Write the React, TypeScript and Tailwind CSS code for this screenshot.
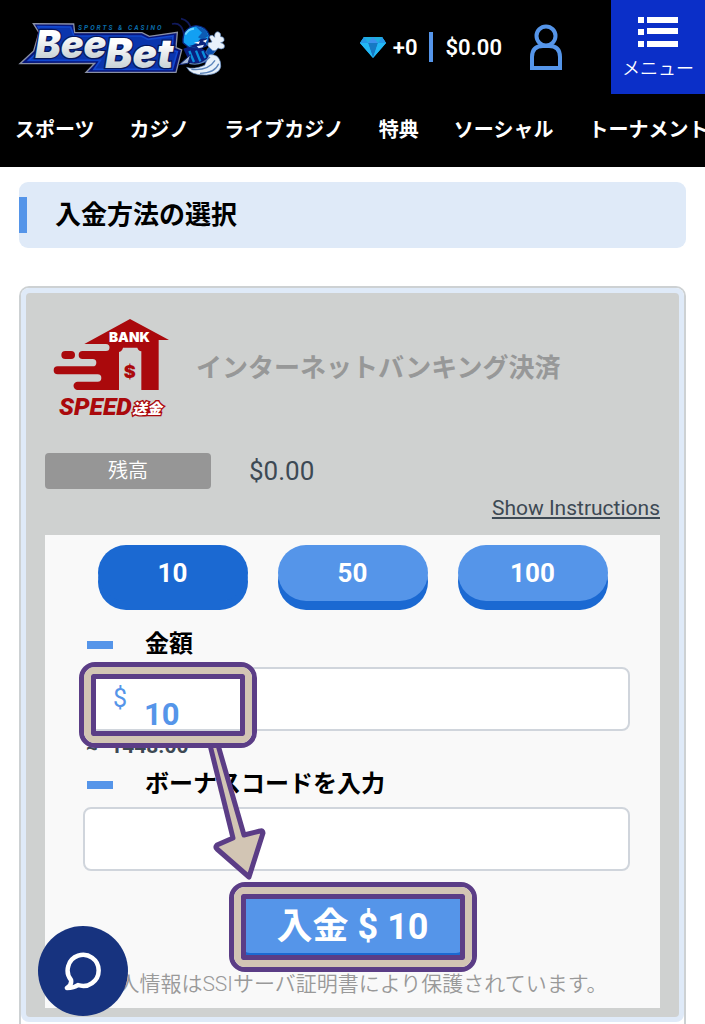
import { useState } from 'react';

const navItems = ['スポーツ', 'カジノ', 'ライブカジノ', '特典', 'ソーシャル', 'トーナメント'];
const presets = ['10', '50', '100'];

function BeeBetLogo() {
  return (
    <svg viewBox="54 48 630 186" className="h-[62px] w-[210px]" role="img" aria-label="BeeBet">
      <defs>
        <linearGradient id="silver" x1="0" y1="0" x2="0" y2="1">
          <stop offset="0.3" stopColor="#ffffff" />
          <stop offset="1" stopColor="#b4c2c6" />
        </linearGradient>
      </defs>
      <path
        d="M100 71 L221 72 L224 98 L426 98 L448 109 L532 97 L528 143 L545 150 L528 217 L258 217 L284 190 L60 191 L101 153 L117 98 Z"
        fill="#06157a"
        stroke="#8990a5"
        strokeWidth="4"
      />
      <path
        d="M114 80 L212 81 L222 108 L424 108 L444 118 L519 108 L516 151 L532 155 L517 208 L282 208 L301 181 L86 181 L111 158 L127 105 Z"
        fill="#0a35ad"
        stroke="#1248d0"
        strokeWidth="5"
      />
      <g
        fontFamily="Inter, 'Liberation Sans', sans-serif"
        fontWeight="900"
        fontStyle="italic"
        stroke="#07185e"
        strokeWidth="8"
        paintOrder="stroke"
        fill="url(#silver)"
      >
        <text x="106" y="174" fontSize="114">Bee</text>
        <text x="316" y="203" fontSize="122">Bet</text>
      </g>
      <text
        x="234"
        y="89"
        fontFamily="Roboto, sans-serif"
        fontStyle="italic"
        fontWeight="700"
        fontSize="20"
        className="tracking-[6px]"
        fill="#0a6aa8"
      >
        SPORTS &amp; CASINO
      </text>
      <path d="M574 90 Q569 62 543 56 M552 108 Q548 65 516 72" fill="none" stroke="#111a5c" strokeWidth="5" />
      <path d="M550 146 L572 138 L606 146 L632 160 L620 188 L570 190 Z" fill="#0a1f80" />
      <path d="M568 153 L582 186 M588 152 L601 184 M607 153 L616 174" stroke="#0a8edc" strokeWidth="7" />
      <path d="M549 128 Q546 84 588 77 Q618 79 628 106 L622 136 L600 146 L566 142 Z" fill="#12a0f2" stroke="#0b2680" strokeWidth="4" />
      <path d="M588 80 Q620 82 625 108 L608 119 L594 112 L606 98 Z" fill="#0d5bb4" />
      <path d="M556 104 Q564 87 582 86" fill="none" stroke="#6bd4ff" strokeWidth="6" />
      <path d="M566 138 Q588 136 600 118 L622 114 L618 138 L600 147 Z" fill="#0b2680" />
      <path d="M582 128 L600 124 L596 132 Z M608 123 L622 118 L617 128 Z" fill="#ffffff" />
      <path d="M590 139 L612 134 L608 142 L596 145 Z" fill="#dceafc" />
      <g fill="#e8f1fa" stroke="#5b84bb" strokeWidth="2">
        <path d="M618 158 Q622 140 636 138 L652 146 Q642 164 628 168 Z" fill="#0a4fb0" />
        <path d="M628 112 Q630 104 638 106 L644 112 Q642 96 654 95 Q664 98 662 110 Q674 110 672 122 Q668 128 662 128 Q678 132 672 144 Q664 150 654 144 Q644 160 632 146 Q620 138 624 128 L636 126 Z" />
        <path d="M628 164 Q655 162 661 185 Q671 221 620 225 Q572 227 560 202 Q580 210 614 196 Z" />
        <path d="M568 190 Q603 199 630 171 M574 208 Q625 213 645 181 M600 220 Q645 219 656 191" fill="none" strokeWidth="4" />
      </g>
      <path d="M538 194 L572 164 L564 190 Z" fill="#a7bad8" stroke="#142b78" strokeWidth="3" />
    </svg>
  );
}

function Diamond() {
  return (
    <svg viewBox="0 0 26 23" className="h-[23px] w-[26px]" aria-hidden="true">
      <path d="M4 1h18l4 6-13 15L0 7z" fill="#25b6f5" />
      <path d="M4 1h18l4 6H0z" fill="#1faee0" />
      <path d="M4 1 0 7h8zM22 1l4 6h-8z" fill="#2498e8" />
      <path d="M13 1 8 7h10z" fill="#3d91ee" />
      <path d="M8 7h10l-5 15z" fill="#1679c4" />
      <path d="M0 7h8l5 15zM26 7h-8l-5 15z" fill="#22b8f6" />
    </svg>
  );
}

function BankLogo() {
  return (
    <svg viewBox="36 36 360 306" className="h-[102px] w-[120px] shrink-0 overflow-visible" role="img" aria-label="BANK SPEED送金">
      <g fill="#aa090c">
        <path d="M133 117 L270 42 L387 105 H356 V255 H304 V139 Q295 138 292 128 H249 Q247 138 237 141 V255 H113 A12 12 0 0 1 113 230 H173 A11 11 0 0 0 173 208 H53 A12 12 0 0 1 53 184 H158 A11 11 0 0 0 158 162 H128 A12 12 0 0 1 128 138 H198 A10 10 0 0 0 198 117 Z" />
        <rect x="64" y="138" width="41" height="24" rx="12" />
      </g>
      <g fontFamily="Inter, 'Noto Sans CJK JP', sans-serif" fontWeight="900">
        <text x="207" y="111" fontSize="41" fill="#fff">BANK</text>
        <text x="251" y="219" fontSize="54" fill="#aa090c">$</text>
        <text x="57" y="331" fontSize="74" fontFamily="Roboto, sans-serif" fontStyle="italic" fill="#aa090c">SPEED</text>
        <text
          x="277"
          y="327"
          fontSize="44"
          fontStyle="italic"
          fill="#fff"
          stroke="#aa090c"
          strokeWidth="8"
          paintOrder="stroke"
        >
          送金
        </text>
      </g>
    </svg>
  );
}

function HighlightFrame({ className }: { className: string }) {
  return (
    <div className={`pointer-events-none absolute z-20 rounded-[16px] border-5 border-[#5b3d86] ${className}`}>
      <div className="h-full rounded-[11px] border-7 border-[#d2c5b4]">
        <div className="h-full rounded-[2px] border-5 border-[#5b3d86] outline-2 outline-[#d2c5b4]" />
      </div>
    </div>
  );
}

function FieldLabel({ htmlFor, children }: { htmlFor: string; children: string }) {
  return (
    <label htmlFor={htmlFor} className="flex h-[38px] items-center gap-8 pl-1 text-2xl font-bold text-black">
      <span className="mt-[2px] h-2 w-[26px] bg-[#5595e9]" />
      {children}
    </label>
  );
}

export default function App() {
  const [amount, setAmount] = useState('10');

  return (
    <div className="flex min-h-screen flex-col overflow-hidden bg-white font-['Roboto','Noto_Sans_CJK_JP',sans-serif]">
      <header className="bg-black text-white">
        <div className="flex h-[94px] items-center">
          <a href="#home" className="ml-[18px]">
            <BeeBetLogo />
          </a>
          <div className="ml-auto flex items-center text-[22px] font-semibold">
            <Diamond />
            <span className="ml-[7px]">+0</span>
            <span className="ml-3 h-[30px] w-1 bg-[#5595e9]" />
            <span className="ml-3">$0.00</span>
          </div>
          <a href="#account" aria-label="アカウント" className="mr-[49px] ml-7">
            <svg viewBox="0 0 32 46" className="h-[46px] w-8" fill="none" stroke="#5595e9" strokeWidth="4">
              <circle cx="16" cy="12" r="9.5" />
              <path d="M2 44V33Q2 22 13 22H19Q30 22 30 33V44Z" />
            </svg>
          </a>
          <button type="button" className="flex h-full w-[94px] flex-col items-center bg-[#0b2fc8] pt-4">
            <svg viewBox="0 0 40 31" className="h-[31px] w-10" fill="#fff" aria-hidden="true">
              <path d="M0 1h6v6H0zM9 1h31v6H9zM0 13h6v6H0zM9 12h31v6H9zM0 25h6v6H0zM9 25h31v6H9z" />
            </svg>
            <span className="mt-2 text-lg leading-7 font-[350]">メニュー</span>
          </button>
        </div>
        <nav className="flex h-[73px] gap-[35px] overflow-hidden pt-[21px] pl-[15px] text-xl leading-[30px] font-bold whitespace-nowrap">
          {navItems.map((item) => (
            <a key={item} href="#nav">
              {item}
            </a>
          ))}
        </nav>
      </header>

      <main className="flex flex-1 flex-col px-[19px] pt-[15px]">
        <div className="flex h-[66px] items-start rounded-[9px] bg-[#dfeaf8] pt-[15px]">
          <span className="h-9 w-2 bg-[#5595e9]" />
          <h1 className="ml-7 text-[26px] leading-9 font-bold text-black">入金方法の選択</h1>
        </div>

        <div className="mt-[38px] flex-1 rounded-t-[10px] border-2 border-b-0 border-[#cdd1d3]">
          <section className="rounded-[8px] bg-[#dfeaf8] p-[5px]">
            <div className="rounded-[4px] bg-[#cfd1d0] px-[19px] pt-6 pb-[9px]">
              <div className="flex items-center pl-[7px]">
                <BankLogo />
                <h2 className="ml-6 text-[26px] leading-9 font-bold text-[#979898]">インターネットバンキング決済</h2>
              </div>
              <div className="mt-[34px] flex h-9 items-center">
                <span className="flex h-9 w-[166px] items-center justify-center rounded-[4px] bg-[#969696] text-xl font-[350] text-white">
                  残高
                </span>
                <span className="ml-[38px] text-[26px] text-[#3d4954]">$0.00</span>
              </div>
              <div className="mt-[3px] flex h-[43px] justify-end">
                <a href="#instructions" className="text-[21px] leading-8 text-[#3d4954] underline underline-offset-2">
                  Show Instructions
                </a>
              </div>

              <form
                className="relative flex flex-col bg-[#f9f9f9] px-[38px] pt-[10px]"
                onSubmit={(event) => event.preventDefault()}
              >
                <div className="flex justify-center gap-[30px]">
                  {presets.map((value) => (
                    <button
                      key={value}
                      type="button"
                      onClick={() => setAmount(value)}
                      className={`h-14 w-[150px] rounded-full text-[26px] font-bold text-white shadow-[0_9px_0_#1b69d2] ${
                        amount === value ? 'bg-[#1b69d2]' : 'bg-[#5595e9]'
                      }`}
                    >
                      {value}
                    </button>
                  ))}
                </div>

                <div className="mt-6 -mr-2">
                  <FieldLabel htmlFor="amount">金額</FieldLabel>
                </div>
                <div className="relative mt-1 -mr-2">
                  <span className="absolute top-4 left-[30px] text-[25px] leading-8 text-[#5595e9]">$</span>
                  <input
                    id="amount"
                    value={amount}
                    onChange={(event) => setAmount(event.target.value)}
                    className="h-16 w-full rounded-[8px] border-2 border-[#d0d5dc] bg-white pt-[30px] pl-[59px] text-[31px] leading-9 font-bold text-[#5595e9]"
                  />
                  <HighlightFrame className="-top-[5px] -left-1 h-[86px] w-[178px]" />
                </div>
                <p className="flex h-[33px] gap-3 pl-[3px] text-[21px] leading-7 font-bold text-[#3d4954]">
                  <span>≈</span>
                  <span>1448.00</span>
                </p>
                <div className="-mr-2">
                  <FieldLabel htmlFor="bonus">ボーナスコードを入力</FieldLabel>
                  <input
                    id="bonus"
                    className="mt-1 h-16 w-full rounded-[8px] border-2 border-[#d0d5dc] bg-white px-4 text-2xl"
                  />
                </div>

                <div className="relative mt-[23px] self-center">
                  <button
                    type="submit"
                    className="h-[59px] w-[222px] rounded-[8px] bg-[#5595e9] pt-2 text-4xl leading-10 font-bold text-white shadow-[0_8px_0_#1b69d2]"
                  >
                    入金 $ {amount}
                  </button>
                  <HighlightFrame className="-top-3 -left-[13px] h-[90px] w-[248px]" />
                </div>
                <p className="-mx-8 mt-[15px] pb-2 text-center text-[21px] leading-8 font-[350] whitespace-nowrap text-[#999]">
                  個人情報はSSIサーバ証明書により保護されています。
                </p>

                <svg
                  viewBox="0 0 64 138"
                  className="pointer-events-none absolute top-[210px] left-[160px] z-10 h-[138px] w-16"
                  fill="#d2c5b4"
                  stroke="#5b3d86"
                  strokeWidth="5"
                  strokeLinejoin="round"
                  aria-hidden="true"
                >
                  <path d="M5 0L28 93L12 100Q10 102 12 104L44 132L58 88Q58 85 55 86L39 90L13 0Z" />
                </svg>
              </form>
            </div>
          </section>
        </div>
      </main>

      <button
        type="button"
        aria-label="チャット"
        className="fixed bottom-[8px] left-[38px] z-40 flex size-[90px] items-center justify-center rounded-full bg-[#17337f]"
      >
        <svg viewBox="0 0 38 40" className="h-10 w-[38px]" fill="none" stroke="#fff" strokeWidth="4.5" strokeLinecap="round" strokeLinejoin="round" aria-hidden="true">
          <path d="M14 34A15.5 15.5 0 1 0 7 29Q8 34 3 37Q10 37 14 34Z" />
        </svg>
      </button>
    </div>
  );
}
